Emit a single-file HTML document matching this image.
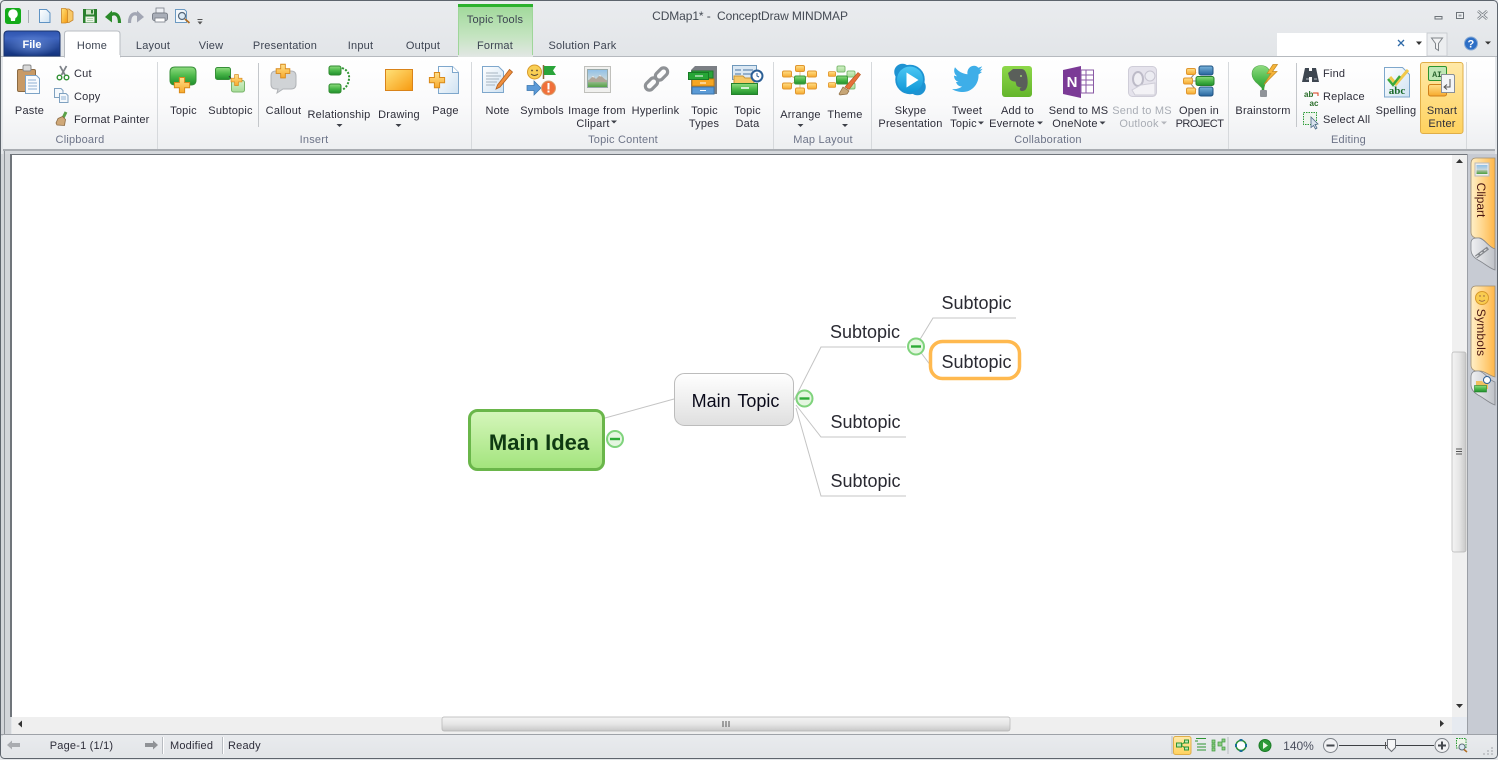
<!DOCTYPE html>
<html><head><meta charset="utf-8"><title>CDMap1* - ConceptDraw MINDMAP</title>
<style>
html,body{margin:0;padding:0;width:1498px;height:760px;overflow:hidden;background:#fff}
svg{display:block;position:absolute;left:0;top:0}
text{font-family:"Liberation Sans",sans-serif;font-size:11px;letter-spacing:.2px;fill:#2e2e3a;text-anchor:middle}
.l{text-anchor:start}
.g{fill:#6d7488}
.tab{font-size:11px;fill:#3d4452}
.off{fill:#a9adb5}
.m{font-size:18px;fill:#2a2a32;letter-spacing:0}
</style></head><body>
<svg width="1498" height="760" viewBox="0 0 1498 760" xmlns="http://www.w3.org/2000/svg">
<defs>
<linearGradient id="bg" x1="0" y1="0" x2="0" y2="1"><stop offset="0" stop-color="#eaecef"/><stop offset="1" stop-color="#e2e5e8"/></linearGradient>
<linearGradient id="rb" x1="0" y1="0" x2="0" y2="1"><stop offset="0" stop-color="#fff"/><stop offset=".5" stop-color="#fafafb"/><stop offset="1" stop-color="#edeff1"/></linearGradient>
<linearGradient id="file" x1="0" y1="0" x2="0" y2="1"><stop offset="0" stop-color="#2f55b0"/><stop offset=".3" stop-color="#3f65bf"/><stop offset=".55" stop-color="#2a4d9e"/><stop offset="1" stop-color="#12327c"/></linearGradient>
<radialGradient id="fileg" cx=".5" cy=".55" r=".5"><stop offset="0" stop-color="#6f93de" stop-opacity=".75"/><stop offset="1" stop-color="#6f93de" stop-opacity="0"/></radialGradient>
<linearGradient id="tt" x1="0" y1="0" x2="0" y2="1"><stop offset="0" stop-color="#9ed898"/><stop offset=".6" stop-color="#c4e4c0"/><stop offset="1" stop-color="#e2e7e4"/></linearGradient>
<linearGradient id="gr" x1="0" y1="0" x2="0" y2="1"><stop offset="0" stop-color="#8fdc80"/><stop offset=".5" stop-color="#4cb84a"/><stop offset="1" stop-color="#1f8f2c"/></linearGradient>
<linearGradient id="lg" x1="0" y1="0" x2="0" y2="1"><stop offset="0" stop-color="#d4f0c8"/><stop offset="1" stop-color="#a6dc98"/></linearGradient>
<linearGradient id="or" x1="0" y1="0" x2="1" y2="1"><stop offset="0" stop-color="#ffe27a"/><stop offset="1" stop-color="#f79a10"/></linearGradient>
<linearGradient id="pl" x1="0" y1="0" x2="0" y2="1"><stop offset="0" stop-color="#ffe08a"/><stop offset="1" stop-color="#f7a92c"/></linearGradient>
<linearGradient id="idea" x1="0" y1="0" x2="0" y2="1"><stop offset="0" stop-color="#d6f6bc"/><stop offset="1" stop-color="#a2e47c"/></linearGradient>
<linearGradient id="mt" x1="0" y1="0" x2="0" y2="1"><stop offset="0" stop-color="#fff"/><stop offset="1" stop-color="#dfdfdf"/></linearGradient>
<linearGradient id="sb" x1="0" y1="0" x2="1" y2="0"><stop offset="0" stop-color="#f4f4f4"/><stop offset=".5" stop-color="#e6e6e6"/><stop offset="1" stop-color="#c8c8c8"/></linearGradient>
<linearGradient id="sh" x1="0" y1="0" x2="0" y2="1"><stop offset="0" stop-color="#f4f4f4"/><stop offset=".5" stop-color="#e6e6e6"/><stop offset="1" stop-color="#c8c8c8"/></linearGradient>
<linearGradient id="pt" x1="0" y1="0" x2="1" y2="0"><stop offset="0" stop-color="#fff0c8"/><stop offset=".5" stop-color="#ffd58a"/><stop offset="1" stop-color="#ffb648"/></linearGradient>
<linearGradient id="gt" x1="0" y1="0" x2="1" y2="0"><stop offset="0" stop-color="#f0f1f3"/><stop offset="1" stop-color="#bfc2c8"/></linearGradient>
<linearGradient id="se" x1="0" y1="0" x2="0" y2="1"><stop offset="0" stop-color="#ffe9a8"/><stop offset="1" stop-color="#ffd25e"/></linearGradient>
<linearGradient id="sky" x1="0" y1="0" x2="0" y2="1"><stop offset="0" stop-color="#4cc8f4"/><stop offset="1" stop-color="#0f96d6"/></linearGradient>
<linearGradient id="ev" x1="0" y1="0" x2="0" y2="1"><stop offset="0" stop-color="#8ed84a"/><stop offset="1" stop-color="#64b52c"/></linearGradient>
<linearGradient id="bl" x1="0" y1="0" x2="0" y2="1"><stop offset="0" stop-color="#7ab4dc"/><stop offset="1" stop-color="#26649c"/></linearGradient>
<linearGradient id="doc" x1="0" y1="0" x2="1" y2="1"><stop offset="0" stop-color="#fff"/><stop offset="1" stop-color="#cfe2f2"/></linearGradient>
<linearGradient id="pic" x1="0" y1="0" x2="0" y2="1"><stop offset="0" stop-color="#8fc0e8"/><stop offset=".55" stop-color="#c9d8dc"/><stop offset=".6" stop-color="#a8c0a0"/><stop offset="1" stop-color="#4ea040"/></linearGradient>
<linearGradient id="stat" x1="0" y1="0" x2="0" y2="1"><stop offset="0" stop-color="#e9ebee"/><stop offset="1" stop-color="#e2e5e8"/></linearGradient>
<g id="plus"><path d="M-2.6-7.5h5.2v5h5v5.200h-5v5h-5.200v-5h-5v-5.200h5z" fill="url(#pl)" stroke="#d8891a" stroke-width="1"/></g>
<g id="minus"><circle r="8" fill="#e4f6e0" stroke="#7fd37c" stroke-width="2"/><rect x="-5" y="-1.2" width="10" height="2.400" fill="#2cab36"/></g>
<g id="tri"><path d="M-3 0h6l-3 3z" fill="#3d4048"/></g>
<g id="box"><rect x="-4.500" y="-3" width="9" height="6" rx="1.500" fill="url(#pl)" stroke="#e0962e"/></g>
<g id="cbox"><rect x="-5.500" y="-4" width="11" height="8" rx="1.500" fill="url(#gr)" stroke="#3a9a3a"/></g>
<g id="sbox"><rect x="-4" y="-3" width="8" height="6" rx="1.500" fill="url(#lg)" stroke="#7fbc72"/></g>
<g id="rbox"><rect x="-6" y="-4.500" width="12" height="9" rx="2" fill="url(#gr)" stroke="#2f8a2f"/></g>
<g id="cgbox"><rect x="-7" y="-4" width="14" height="8" rx="2" fill="url(#gr)" stroke="#2f8a2f"/></g>
</defs>

<!-- window chrome -->
<rect width="1498" height="760" fill="#e4e7ea"/>
<rect x="0" y="0" width="1498" height="57" fill="url(#bg)"/>
<rect x=".5" y=".5" width="1497" height="758" rx="4" fill="none" stroke="#5e656d"/>
<rect x="1" y="56" width="1496" height="1" fill="#b6babf"/>

<!-- ribbon -->
<rect x="3" y="57" width="1492" height="93" fill="url(#rb)"/>
<rect x="3" y="149" width="1492" height="2" fill="#a9adb2"/>
<rect x="3" y="151" width="1492" height="3" fill="#d6d9dd"/>
<g fill="#d6d9dc">
<rect x="157" y="62" width="1" height="87"/><rect x="471" y="62" width="1" height="87"/><rect x="773" y="62" width="1" height="87"/><rect x="871" y="62" width="1" height="87"/><rect x="1228" y="62" width="1" height="87"/><rect x="1466" y="62" width="1" height="87"/>
</g>
<rect x="258" y="63" width="1" height="64" fill="#c4c7cb"/><rect x="1296" y="63" width="1" height="64" fill="#c4c7cb"/>

<!-- left gutter + canvas -->
<rect x="1" y="154" width="10" height="582" fill="#d2d5d9"/>
<rect x="4" y="151" width="1" height="584" fill="#8d9298"/>
<rect x="10" y="154" width="2" height="563" fill="#70757b"/>
<rect x="10" y="154" width="1458" height="1" fill="#70757b"/>
<rect x="12" y="155" width="1440" height="562" fill="#fff"/>
<rect x="1468" y="154" width="29" height="581" fill="#c7cbd3"/>
<rect x="1467" y="154" width="1" height="581" fill="#9a9ea5"/>

<!-- scrollbars -->
<rect x="1452" y="155" width="15" height="562" fill="#f0f0f0"/>
<rect x="1452" y="352" width="14" height="200" rx="2" fill="url(#sb)" stroke="#b4b4b4" stroke-width=".7"/>
<path d="M1456 449h6M1456 451.500h6M1456 454h6" stroke="#555" stroke-width="1"/>
<path d="M1456 163l3.500-4 3.500 4z" fill="#333"/><path d="M1456 704l3.500 4 3.500-4z" fill="#333"/>
<rect x="12" y="717" width="1440" height="17" fill="#efefef"/>
<rect x="1452" y="717" width="15" height="17" fill="#e6eaf0"/>
<rect x="442" y="717" width="568" height="14" rx="2" fill="url(#sh)" stroke="#b4b4b4" stroke-width=".7"/>
<path d="M723 721v6M726 721v6M729 721v6" stroke="#555"/>
<path d="M22 720.500l-4 3.500 4 3.500z" fill="#333"/><path d="M1440 720l4 3.500-4 3.500z" fill="#333"/>

<!-- title + tabs -->
<g id="qat">
<rect x="5" y="8" width="16" height="16" rx="2.500" fill="#14ab1a"/>
<circle cx="13" cy="14" r="4.800" fill="#fff"/><path d="M10.500 17h5l-.5 4h-4z" fill="#fff"/>
<rect x="28" y="10" width="1" height="13" fill="#a8acb2"/>
<path d="M39.500 9.500h7l3.500 3.500v9.500h-10.500z" fill="url(#doc)" stroke="#5f93c4"/>
<path d="M64 9h5l4 3v8l-4 2.500h-5z" fill="#f8c868" stroke="#c9862a" stroke-width=".8"/><path d="M61.500 8.500h4l2 2v12l-2 .5h-4z" fill="url(#or)" stroke="#c9862a" stroke-width=".8"/>
<path d="M83 9h14v14H83z" fill="#2a7f2e"/><rect x="86" y="9.500" width="8" height="5" fill="#cfe3c8"/><rect x="91" y="10" width="2" height="3.500" fill="#2a7f2e"/><rect x="85.500" y="16.500" width="9" height="6" fill="#eef5ea"/><path d="M87 18.500h6M87 20.500h6" stroke="#9cc39a" stroke-width=".8"/>
<path d="M105 17l7-6.500v12z" fill="#2a8a2a"/><path d="M110 15.500c4-3.500 9.500-2 9.500 7.500" fill="none" stroke="#2a8a2a" stroke-width="3.200"/>
<path d="M144 17l-7-6.500v12z" fill="#a2a6b4"/><path d="M139 15.500c-4-3.500-9.500-2-9.500 7.500" fill="none" stroke="#a2a6b4" stroke-width="3.200"/>
<rect x="156" y="8" width="8" height="5" fill="#eef0f4" stroke="#787e88" stroke-width=".8"/><rect x="152.500" y="13" width="15" height="7.500" rx="2" fill="#a9aeb8" stroke="#6a707a" stroke-width=".8"/><rect x="155" y="18" width="10" height="4" fill="#fff" stroke="#787e88" stroke-width=".8"/>
<path d="M175.500 9.500h9l2 2v11h-11z" fill="#f2f7fb" stroke="#6c9ac2"/><circle cx="182" cy="16" r="3.500" fill="#dbeaf5" stroke="#55677a" stroke-width="1.200"/><path d="M185 19l4.500 4" stroke="#b06d22" stroke-width="1.800"/>
<path d="M197.500 19.500h5" stroke="#555"/><path d="M197.500 21.500h5l-2.500 3z" fill="#555"/>
</g>
<text x="750" y="20" style="font-size:12px;fill:#444a54;letter-spacing:-.1px" xml:space="preserve">CDMap1* -  ConceptDraw MINDMAP</text>

<rect x="458" y="4" width="75" height="53" fill="url(#tt)"/><rect x="458" y="4" width="75" height="3" fill="#2cb12e"/>
<rect x="458" y="7" width="1" height="48" fill="#9fd69a"/><rect x="532" y="7" width="1" height="48" fill="#9fd69a"/>
<path d="M4 56V35q0-4 4-4h48q4 0 4 4v21z" fill="url(#file)" stroke="#1b356f"/>
<rect x="5" y="32" width="54" height="24" fill="url(#fileg)"/>
<text x="32" y="48" style="fill:#fff;font-weight:bold;font-size:11px;letter-spacing:0">File</text>
<path d="M64.500 57V34q0-3 3-3h49.500q3 0 3 3v23z" fill="#fff" stroke="#b8bcc2"/><rect x="65" y="55" width="55" height="3" fill="#fff"/>
<text class="tab" x="92" y="49">Home</text><text class="tab" x="153" y="49">Layout</text><text class="tab" x="211" y="49">View</text><text class="tab" x="285" y="49">Presentation</text><text class="tab" x="360.500" y="49">Input</text><text class="tab" x="423" y="49">Output</text><text class="tab" x="495" y="49">Format</text><text class="tab" x="582.500" y="49">Solution Park</text>
<text class="tab" x="495" y="23">Topic Tools</text>

<!-- window controls -->
<path d="M1435 16.500h7v2.500h-7z" fill="#e8eaec" stroke="#6d7379"/>
<rect x="1456.500" y="12.500" width="7" height="6" fill="#eef0f2" stroke="#6d7379"/><rect x="1458.500" y="14.500" width="3" height="2" fill="#9ba0a6"/>
<path d="M1478 11l9 8M1487 11l-9 8" stroke="#7b8087" stroke-width="2.600"/><path d="M1478 11l9 8M1487 11l-9 8" stroke="#eef0f2" stroke-width="1"/>
<rect x="1277" y="33" width="150" height="23" fill="#fff"/>
<rect x="1427" y="33" width="20" height="23" fill="#eceef0" stroke="#c3c7cc" stroke-width=".8"/>
<path d="M1431.500 38h11l-4 5.500v7l-3-2v-5z" fill="#f1f2f3" stroke="#7f8489"/>
<path d="M1398 40l6 6M1404 40l-6 6" stroke="#2f6aa8" stroke-width="1.300"/>
<path d="M1416 41.500h6l-3 3.500z" fill="#333"/>
<circle cx="1471" cy="43.500" r="6.500" fill="#2d6fc6" stroke="#89abd4" stroke-width="1"/><text x="1471" y="47.500" style="fill:#fff;font-weight:bold;font-size:11px">?</text>
<path d="M1485 41.500h6l-3 3z" fill="#333"/>

<!-- Clipboard -->
<g id="clipboard">
<rect x="17.500" y="69.500" width="18" height="22" rx="1.500" fill="#c89a66" stroke="#8b6a42"/>
<rect x="23" y="65" width="8" height="6" rx="1.500" fill="#d9d9d9" stroke="#888"/>
<path d="M25.500 75.500h11l3 3v15h-14z" fill="#f8fbfe" stroke="#7ca3c7"/>
<path d="M28 80h8M28 83h9M28 86h9M28 89h9" stroke="#8fb2d4"/>
<path d="M60 66l5 9M66.500 66l-5 9" stroke="#7d8288" stroke-width="1.800"/><circle cx="59.500" cy="77.500" r="2.300" fill="#fff" stroke="#2f8f32" stroke-width="1.400"/><circle cx="66.500" cy="77.500" r="2.300" fill="#fff" stroke="#2f8f32" stroke-width="1.400"/>
<path d="M54.500 88.500h6.500l2 2v7h-8.500z" fill="#f4f8fc" stroke="#7fa1c0"/><path d="M59.500 93.500h6.500l2 2v7h-8.500z" fill="#f4f8fc" stroke="#7fa1c0"/><path d="M61 97h5M61 99h5" stroke="#8fb2d4"/>
<path d="M63 118l3-6" stroke="#5aa248" stroke-width="3"/><path d="M58 118.500l4.500-2 3 3-1 6-7.500-.5-1-2z" fill="#cfa878" stroke="#8b6a42" stroke-width=".8"/>
</g>
<g id="insert">
<path d="M170 72q0-5 5-5h16q5 0 5 5v8q0 5-5 5h-16q-5 0-5-5z" fill="url(#gr)" stroke="#378f38"/>
<use href="#plus" x="182" y="85"/>
<rect x="215.500" y="67.500" width="15" height="12" rx="2" fill="url(#gr)" stroke="#378f38"/>
<path d="M229 76l4 5" stroke="#333"/>
<rect x="231.500" y="80.500" width="13" height="11.500" rx="2" fill="url(#lg)" stroke="#79b46c"/>
<g transform="translate(236.500 80) scale(.72)"><use href="#plus"/></g>
<path d="M271 76q0-5 5-5h15q5 0 5 5v8q0 5-5 5h-8l-6 4 1-4h-2q-5 0-5-5z" fill="#d0d3d6" stroke="#b0b3b7"/>
<g transform="translate(283 71) scale(.9)"><use href="#plus"/></g>
<use href="#rbox" x="335" y="70.500"/>
<use href="#rbox" x="335" y="88.500"/>
<path d="M342 68q8 3 7 11t-7 11" fill="none" stroke="#2f9432" stroke-width="2" stroke-dasharray="2 1.500"/>
<rect x="385.500" y="69.500" width="27" height="21" fill="url(#or)" stroke="#d9831a"/>
<path d="M438.500 66.500h14l6 6v21h-20z" fill="url(#doc)" stroke="#7ea7cc"/><path d="M452.500 66.500v6h6" fill="#fff" stroke="#7ea7cc"/>
<use href="#plus" x="437" y="80"/>
</g>
<g id="content">
<path d="M482.500 66.500h16l5 5v21h-21z" fill="url(#doc)" stroke="#7ea7cc"/>
<path d="M486 73h12M486 76h15M486 79h13M486 82h11M486 85h9" stroke="#a6b4c0"/>
<path d="M496 89l1.500-4 12-15.500 3 2.500-12.500 15z" fill="#ef8f3e" stroke="#b4601e" stroke-width=".8"/>
<circle cx="534.500" cy="72" r="7" fill="#f9cf54" stroke="#d89a2a"/><circle cx="532" cy="70.500" r=".9" fill="#543"/><circle cx="537" cy="70.500" r=".9" fill="#543"/><path d="M531 74q3.500 3 7 0" fill="none" stroke="#543"/>
<path d="M543.500 65v14" stroke="#8a6a3a" stroke-width="1.500"/><path d="M544 66h12l-3 4.500 3 4.500h-12z" fill="#2aa43a"/>
<path d="M527 85.500h7V81l7 7-7 7v-4.500h-7z" fill="#5b9ad8" stroke="#3874ad" stroke-width=".7"/>
<circle cx="548.500" cy="88" r="7" fill="#f0703a" stroke="#d8a070"/><rect x="547.500" y="83" width="2" height="6.500" fill="#fff"/><rect x="547.500" y="90.500" width="2" height="2" fill="#fff"/>
<rect x="584.500" y="66.500" width="26" height="26" fill="#f0f0ee" stroke="#c0c0bc"/>
<rect x="587.500" y="69.500" width="20" height="18" fill="url(#pic)" stroke="#9aa"/>
<path d="M588 81l5-5 3 3 4-4 7 6v1h-19z" fill="#b0a699"/><path d="M592 77l1-1 1.500 1.500zM599 76l1-1 1.500 1.500z" fill="#fff"/>
<g fill="none" stroke="#8f9296" stroke-width="3.200"><rect x="657.500" y="67" width="8" height="14" rx="4" transform="rotate(45 661.500 74)"/><rect x="647.500" y="77" width="8" height="14" rx="4" transform="rotate(45 651.500 84)"/></g>
<path d="M691 70l4-4h22v28h-26z" fill="#7b7f84"/><rect x="692" y="71" width="21" height="7" fill="#2aa43a" stroke="#1e7c2a"/>
<rect x="692" y="79" width="22" height="7" fill="#f5a623" stroke="#c67d10"/><rect x="692" y="87" width="22" height="7" fill="#5a9ad6" stroke="#3a74ac"/>
<rect x="688.500" y="72.500" width="20" height="7" fill="#26a636" stroke="#177a25"/><path d="M695 76h8M700 83h6M700 90.500h6" stroke="#fff"/>
<rect x="732.500" y="65.500" width="24" height="14" fill="#dbe8f3" stroke="#6f98bb"/><path d="M735 70h6M743 70h10M735 74h6M743 74h10" stroke="#4a75a0"/>
<path d="M734 76h9l2 2h9v6h-20z" fill="#f6c765" stroke="#c89436"/>
<rect x="731.500" y="83.500" width="26" height="11" fill="url(#gr)" stroke="#26812c"/><path d="M741 88h8" stroke="#fff" stroke-width="1.500"/>
<circle cx="757" cy="76" r="5.500" fill="#fff" stroke="#2c5f95" stroke-width="2"/><path d="M757 73v3l2 1" stroke="#2c5f95" fill="none"/>
</g>
<g id="layout">
<path d="M800 68v23M786 74l14 6 12-6M786 86l14-6 12 6" fill="none" stroke="#d8b070" stroke-width=".8"/>
<use href="#box" x="800" y="68.500"/><use href="#box" x="800" y="91"/><use href="#box" x="787" y="74"/><use href="#box" x="787" y="86"/><use href="#box" x="812" y="74"/><use href="#box" x="812" y="86"/>
<use href="#cbox" x="800" y="80"/>
<use href="#sbox" x="841" y="69"/><use href="#sbox" x="851" y="74"/><use href="#sbox" x="851" y="86"/>
<g transform="translate(832 74) scale(.8)"><use href="#box"/></g><g transform="translate(832 85) scale(.8)"><use href="#box"/></g>
<use href="#cbox" x="842" y="80"/>
<path d="M845 87l13-14.500 2.500 2-11.500 15z" fill="#e5703a" stroke="#b4541e" stroke-width=".6"/><path d="M839 94l4-7 6 4-2 3-7 1z" fill="#c7a677" stroke="#8b6a42" stroke-width=".7"/>
</g>
<g id="collab">
<g fill="#1e93d2" stroke="#1e93d2" stroke-width="1.500"><circle cx="910" cy="79.500" r="14"/><circle cx="902.500" cy="72" r="7.500"/><circle cx="917.500" cy="87" r="7.500"/></g>
<g fill="url(#sky)"><circle cx="910" cy="79.500" r="13"/></g>
<path d="M906.500 72.500l12 7.500-12 7.500z" fill="#fff"/>
<path d="M982 72l-3.500 2.500c0 .5 0 1 0 1.500 0 8-6.500 16-15.500 16-4 0-8-1-11-3 4 .5 7.500-.5 10-2.500-3 0-5-1.500-6-4.500h2.500c-3-1-4.500-3.500-4.500-6.500 1 .5 2 .7 3 .8-3-2.500-3.500-6-2-9 3 4 7.500 6.500 12.500 7-.8-4 2-8.500 6.500-8.500 1.800 0 3.200.8 4.300 2 1.300-.3 2.500-.8 3.700-1.500-.5 1.500-1.400 2.500-2.600 3.300 1.200-.1 2.200-.4 3.200-.8-.7 1.100-1.600 2-2.600 2.700z" fill="#3eaee8"/>
<rect x="1002" y="66" width="30" height="31" rx="3" fill="url(#ev)"/>
<path d="M1008 73l5-4h8c4 0 5 3 6 7 1 5 1 10-1 13-1 2-5 3-6 1-1-1.500 1-3 2.500-2l-1-.5c-2-.5-4-.5-5-2l-1-4c-3 0-5-1-6-3z" fill="#5a5f5a"/>
<circle cx="1021" cy="76" r="1" fill="#9dcf72"/>
<path d="M1063 70l18-4v32l-18-4z" fill="#7b3a96"/><rect x="1081" y="70" width="12.500" height="23" fill="#fff" stroke="#8a5aa5"/><path d="M1081 75h12M1081 80h12M1081 85h12M1086 70v23" stroke="#8a5aa5"/>
<text x="1072" y="87" style="fill:#fff;font-weight:bold;font-size:15px;letter-spacing:0">N</text>
<rect x="1128.500" y="66.500" width="28" height="30" rx="4" fill="#e5e3ec" stroke="#cfcdd8"/>
<ellipse cx="1138" cy="79" rx="5" ry="7" fill="#f0eff4" stroke="#bdbbc8" stroke-width="2"/><path d="M1132 90l9-5 14-2v12h-20z" fill="#f3f2f6" stroke="#cfcdd8"/><circle cx="1150" cy="76" r="5" fill="#ececf2" stroke="#c6c4d0"/>
<path d="M1191 78l5-6M1191 84l5 6M1189 81h7" stroke="#888"/>
<use href="#box" x="1191" y="71.500"/><use href="#box" x="1191" y="91"/><use href="#box" x="1188" y="81"/>
<rect x="1199" y="66" width="14" height="9" rx="2" fill="url(#bl)" stroke="#1e5282"/>
<rect x="1199" y="87" width="14" height="9" rx="2" fill="url(#bl)" stroke="#1e5282"/>
<rect x="1196" y="76.500" width="18" height="9" rx="2" fill="url(#gr)" stroke="#26812c"/>
</g>
<g id="edit">
<path d="M1262 94v-6l-4-4c-5-4-6-7-6-10 0-5 3.500-8.500 9-8.500 5 0 9 3 9 8.500 0 4-2 7-5 10l-1 4v6z" fill="url(#gr)" stroke="#4ea248" stroke-width=".6"/>
<rect x="1260" y="90" width="7" height="7" rx="1" fill="#8f9399"/>
<path d="M1273 64.500l-6 9h4l-7 11 13-13h-4.500l5-7z" fill="#f5b43a" stroke="#c58a20" stroke-width=".7"/>
<path d="M1305 68h4v3h3v-3h4l3 14h-7v-5h-3v5h-7z" fill="#3e4650"/><path d="M1306 79h3M1314 79h3" stroke="#b4bcc4"/>
<text class="l" x="1304" y="97" style="font-size:8px;font-weight:bold;letter-spacing:0;fill:#2a6d2a">ab</text>
<text class="l" x="1309.500" y="106" style="font-size:8px;font-weight:bold;letter-spacing:0;fill:#2a6d2a">ac</text>
<path d="M1313 93h5v3" fill="none" stroke="#d83a1a"/>
<rect x="1303.500" y="112.500" width="13" height="12" fill="#eff5ee" stroke="#2a9a35" stroke-dasharray="1.500 1"/>
<path d="M1311 117l7 7-3 .5 2 3.500-1.500 1-2-3.500-2.500 2z" fill="#d8e2ee" stroke="#4d6885" stroke-width=".8"/>
<path d="M1384.500 67.500h18l7 7v22.500h-25z" fill="url(#doc)" stroke="#7ea7cc"/>
<path d="M1390 77l6 7 12-14" fill="none" stroke="#f0c84a" stroke-width="3"/><path d="M1388 79l5 6 7-9" fill="none" stroke="#3ba83a" stroke-width="2.400"/>
<text x="1397" y="94" style="font-size:11px;font-weight:bold;letter-spacing:0;fill:#1a6a2a;font-family:'Liberation Serif',serif">abc</text>
<rect x="1420.500" y="62.500" width="42.500" height="71" rx="2.500" fill="url(#se)" stroke="#dfae48"/>
<rect x="1428.500" y="66.500" width="18" height="14" rx="1.500" fill="#bfe6b6" stroke="#2c942f"/>
<text x="1437" y="77" style="font-size:8px;letter-spacing:0;font-family:'Liberation Mono',monospace;fill:#245f2a;font-weight:bold">AI</text>
<rect x="1428.500" y="84.500" width="18" height="11.500" rx="2" fill="url(#pl)" stroke="#d0801a"/>
<path d="M1441.500 74.500h12l1 1v17h-13z" fill="#f3f5f7" stroke="#8a9098"/>
<path d="M1450 79v8h-5" fill="none" stroke="#555"/><path d="M1447 84.500l-3 2.500 3 2.500" fill="none" stroke="#555"/>
</g>

<!-- ribbon labels -->
<g>
<text x="29.500" y="114">Paste</text>
<text class="l" x="74" y="77">Cut</text><text class="l" x="74" y="100">Copy</text><text class="l" x="74" y="123">Format Painter</text>
<text x="183.500" y="114">Topic</text><text x="230.500" y="114">Subtopic</text><text x="283.500" y="114">Callout</text>
<text x="339" y="118">Relationship</text><text x="399" y="118">Drawing</text><text x="445.500" y="114">Page</text>
<text x="497.500" y="114">Note</text><text x="542" y="114">Symbols</text><text x="597" y="114">Image from</text><text x="593" y="127">Clipart</text>
<text x="655.500" y="114">Hyperlink</text><text x="704.500" y="114">Topic</text><text x="704" y="127">Types</text><text x="747.500" y="114">Topic</text><text x="747.500" y="127">Data</text>
<text x="800.500" y="118">Arrange</text><text x="845" y="118">Theme</text>
<text x="910.500" y="114">Skype</text><text x="910.500" y="127">Presentation</text>
<text x="967" y="114">Tweet</text><text x="963.500" y="127">Topic</text>
<text x="1017.500" y="114">Add to</text><text x="1012" y="127">Evernote</text>
<text x="1078.500" y="114">Send to MS</text><text x="1075" y="127">OneNote</text>
<text class="off" x="1142" y="114">Send to MS</text><text class="off" x="1139" y="127">Outlook</text>
<text x="1199" y="114">Open in</text><text x="1199.500" y="127" style="letter-spacing:-.5px">PROJECT</text>
<text x="1263" y="114">Brainstorm</text>
<text class="l" x="1323" y="77">Find</text><text class="l" x="1323" y="100">Replace</text><text class="l" x="1323" y="123">Select All</text>
<text x="1396" y="114">Spelling</text><text x="1442" y="114">Smart</text><text x="1442" y="127">Enter</text>
<g><text class="g" x="80" y="143">Clipboard</text><text class="g" x="314" y="143">Insert</text><text class="g" x="623" y="143">Topic Content</text><text class="g" x="823" y="143">Map Layout</text><text class="g" x="1048" y="143">Collaboration</text><text class="g" x="1348.500" y="143">Editing</text></g>
<use href="#tri" x="339.500" y="124"/><use href="#tri" x="398.500" y="124"/><use href="#tri" x="800.500" y="124"/><use href="#tri" x="845" y="124"/>
<use href="#tri" x="614" y="120.500"/><use href="#tri" x="981" y="121.500"/><use href="#tri" x="1040" y="121.500"/><use href="#tri" x="1102.500" y="121.500"/>
<path d="M1161 121.500h6l-3 3z" fill="#b4b6bc"/>
</g>

<!-- mind map -->
<g id="map" fill="none" stroke="#c4c4c4" stroke-width="1">
<path d="M605 418L674 399"/>
<path d="M794 400L821 347H906"/>
<path d="M796 405L821 437H906"/>
<path d="M796 408L821 496H906"/>
<path d="M916 346L933 318H1016"/>
<path d="M916 346L940 378"/>
</g>
<rect x="469.500" y="410.500" width="134" height="59" rx="8" fill="url(#idea)" stroke="#6ab64a" stroke-width="3"/>
<text x="539" y="450" style="font-size:22px;font-weight:bold;fill:#0f3a12;letter-spacing:0">Main Idea</text>
<rect x="674.500" y="373.500" width="119" height="52" rx="10" fill="url(#mt)" stroke="#bcbcbc"/>
<text x="735.500" y="407" style="font-size:18px;fill:#0a0a1a;letter-spacing:0;word-spacing:2px">Main Topic</text>
<rect x="930.500" y="341.500" width="89" height="37" rx="12" fill="#fff" stroke="#ffb94f" stroke-width="3.500"/>
<text class="m" x="865" y="338">Subtopic</text><text class="m" x="976.500" y="309">Subtopic</text><text class="m" x="976.500" y="368">Subtopic</text><text class="m" x="865.500" y="428">Subtopic</text><text class="m" x="865.500" y="487">Subtopic</text>
<use href="#minus" x="615" y="439"/><use href="#minus" x="804.500" y="398.500"/><use href="#minus" x="916" y="346.500"/>

<!-- side panel tabs -->
<path d="M1471 164q0-6 5-6h19v91c-7-2-10-10-15-11h-3c-3 0-6-2-6-6z" fill="url(#pt)" stroke="#a08e70" stroke-width=".8"/>
<rect x="1475" y="163" width="14" height="13" fill="#eee" stroke="#bbb"/><rect x="1476.500" y="165" width="11" height="9" fill="url(#pic)"/>
<text x="0" y="0" transform="translate(1477 200) rotate(90)" style="font-size:12px;fill:#4a1510;letter-spacing:0">Clipart</text>
<path d="M1471 243q0-5 6-5h2c6 1 9 9 16 11v21c-6-2-11-7-17-10-5-3-7-6-7-10z" fill="url(#gt)" stroke="#83868c" stroke-width=".8"/>
<path d="M1476 257l12-9" stroke="#85888d" stroke-width="3.500" fill="none"/><path d="M1476 257l12-9" stroke="#e4e5e7" stroke-width="1" fill="none" stroke-dasharray="3 2"/>
<path d="M1471 292q0-6 5-6h19v91c-7-2-10-6-15-6h-3c-3 0-6-2-6-6z" fill="url(#pt)" stroke="#a08e70" stroke-width=".8"/>
<circle cx="1482" cy="298" r="6.500" fill="#f9cc50" stroke="#d89a2a"/><path d="M1479 300q3 2.500 6 0" fill="none" stroke="#854" stroke-width=".8"/><circle cx="1480" cy="296" r=".7" fill="#854"/><circle cx="1484" cy="296" r=".7" fill="#854"/>
<text x="0" y="0" transform="translate(1477 332.500) rotate(90)" style="font-size:12px;fill:#4a1510;letter-spacing:.2px">Symbols</text>
<path d="M1471 377q0-6 6-6h2c6 1 9 9 16 11v23c-6-2-11-7-17-10-5-3-7-6-7-10z" fill="url(#gt)" stroke="#83868c" stroke-width=".8"/>
<path d="M1476 381h6l2 2h4v6h-12z" fill="#f0c060"/><rect x="1474.500" y="385.500" width="12" height="6.500" fill="url(#gr)" stroke="#26812c" stroke-width=".6"/><circle cx="1487" cy="380" r="3.500" fill="#fff" stroke="#2c5f95"/>

<!-- status bar -->
<rect x="1" y="734" width="1496" height="1" fill="#9ea2a8"/>
<rect x="3" y="735" width="1492" height="22" fill="url(#stat)"/>
<path d="M7 745l5-4.500v2.500h8v4h-8v2.500z" fill="#a9acb0"/>
<path d="M158 745l-5-4.500v2.500h-8v4h8v2.500z" fill="#8f9296"/>
<text x="81.500" y="749">Page-1 (1/1)</text>
<rect x="163" y="737" width="1" height="17" fill="#fff"/><rect x="162" y="737" width="1" height="17" fill="#b8bcc1"/>
<rect x="223" y="737" width="1" height="17" fill="#fff"/><rect x="222" y="737" width="1" height="17" fill="#b8bcc1"/>
<text class="l" x="170" y="749">Modified</text><text class="l" x="228" y="749">Ready</text>
<rect x="1171.500" y="736" width="1" height="18" fill="#b8bcc1"/>
<rect x="1173.500" y="736.500" width="17.500" height="18" rx="2" fill="url(#se)" stroke="#dfae48"/>
<g fill="#bce6b4" stroke="#2d9432"><rect x="1176.500" y="743" width="5" height="4"/><rect x="1184.500" y="740" width="4" height="3"/><rect x="1184.500" y="747" width="4" height="3"/></g><path d="M1181 745l4-3M1181 745l4 3" stroke="#2d9432"/>
<path d="M1195 741h3M1197 744h9M1197 747h9M1197 750h9M1196 738.500h10" stroke="#2d9432"/>
<g fill="#8ecb82" stroke="#3c9a3c" stroke-width=".7"><rect x="1212" y="740" width="3" height="3"/><rect x="1212" y="744" width="3" height="3"/><rect x="1212" y="748" width="3" height="3"/><rect x="1218" y="742" width="4" height="4"/><rect x="1222" y="739" width="3" height="3"/><rect x="1222" y="747" width="3" height="3"/></g>
<rect x="1227.500" y="737" width="1" height="17" fill="#b8bcc1"/>
<circle cx="1241" cy="745.500" r="5" fill="#fff" stroke="#2b8f3a" stroke-width="1.500"/><g fill="#1a6e9a"><rect x="1239.500" y="739" width="3" height="2"/><rect x="1239.500" y="750" width="3" height="2"/><rect x="1235" y="744" width="2" height="3"/><rect x="1245" y="744" width="2" height="3"/></g>
<circle cx="1265" cy="745.500" r="6" fill="#2b9a36" stroke="#1b7a28"/><path d="M1263 742l5 3.500-5 3.500z" fill="#e8f6e4"/>
<text x="1298.500" y="750" style="font-size:12px;fill:#4a4f5e;letter-spacing:0">140%</text>
<circle cx="1330.500" cy="745.500" r="7" fill="#f1f2f4" stroke="#7d8288"/><rect x="1326.500" y="744.500" width="8" height="2" fill="#44484e"/>
<rect x="1339" y="745" width="95" height="1" fill="#3c4044"/>
<path d="M1387.500 739.500h8v8l-4 4-4-4z" fill="#f5f6f7" stroke="#6c7076"/><rect x="1385" y="742" width="1" height="7" fill="#555"/>
<circle cx="1442" cy="745.500" r="7" fill="#f1f2f4" stroke="#7d8288"/><path d="M1438 745.500h8M1442 741.500v8" stroke="#44484e" stroke-width="2"/>
<rect x="1456.500" y="738.500" width="9.500" height="9.500" fill="#eef5ea" stroke="#2a9a35" stroke-dasharray="1.500 1"/><circle cx="1462" cy="747" r="3" fill="#dbe8f2" stroke="#5c6b78"/><path d="M1464 749.500l3 2.500" stroke="#b06d22" stroke-width="1.500"/>
<g fill="#c2c5c9"><rect x="1491" y="747" width="2" height="2"/><rect x="1487" y="750" width="2" height="2"/><rect x="1491" y="750" width="2" height="2"/><rect x="1483" y="753" width="2" height="2"/><rect x="1487" y="753" width="2" height="2"/><rect x="1491" y="753" width="2" height="2"/></g>
</svg>
</body></html>
